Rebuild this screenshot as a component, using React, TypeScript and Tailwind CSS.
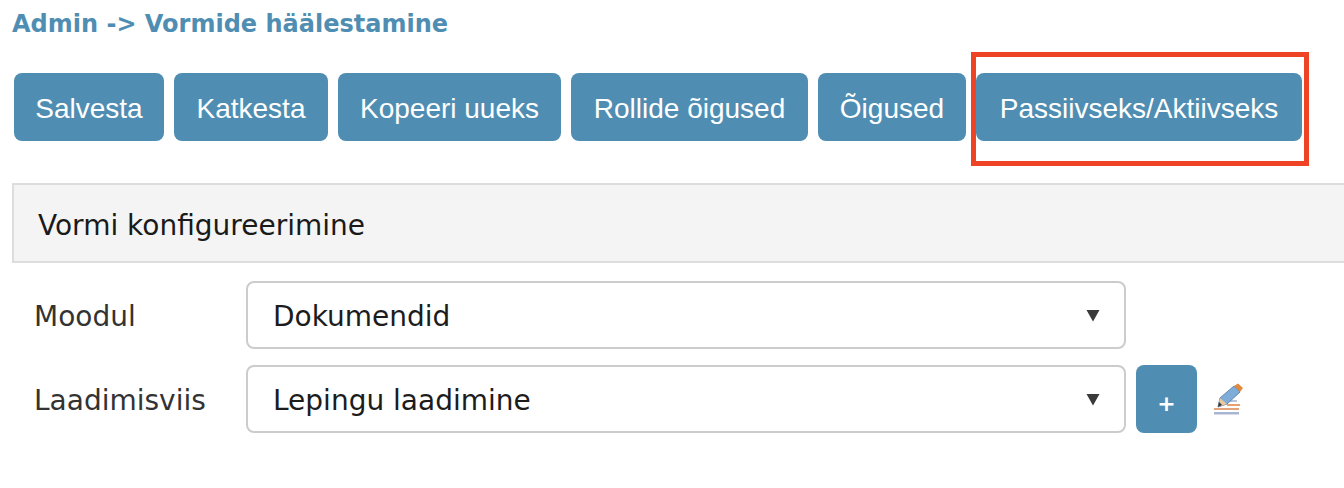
const buttons = [
  { label: 'Salvesta', width: 'w-[150px]' },
  { label: 'Katkesta', width: 'w-[154px]' },
  { label: 'Kopeeri uueks', width: 'w-[223px]' },
  { label: 'Rollide õigused', width: 'w-[237px]' },
  { label: 'Õigused', width: 'w-[148px]' },
];

function ActionButton({ label, width }: { label: string; width: string }) {
  return (
    <button className={`h-[68px] ${width} rounded-[8px] bg-[#4f8eb2] pt-[3px] font-['Liberation_Sans',sans-serif] text-[28px] text-white`}>
      {label}
    </button>
  );
}

function Caret() {
  return (
    <svg className="w-[14px] h-[13px]" viewBox="0 0 14 13">
      <path d="M0.5 1h13L7 12.5z" fill="#3a3a3a" />
    </svg>
  );
}

function FakeSelect({ value }: { value: string }) {
  return (
    <div className="flex h-[68px] w-[880px] items-center justify-between rounded-[8px] border-2 border-[#cccccc] bg-white pl-[25px] pr-[24px] text-[#1c1c1c]">
      <span className="pt-[3px]">{value}</span>
      <Caret />
    </div>
  );
}

function EditIcon() {
  return (
    <svg className="w-[30px] h-[32px]" viewBox="0 0 30 32">
      <rect x="7" y="17" width="17" height="2" fill="#b7c4dc" />
      <rect x="14" y="21" width="13" height="2" fill="#e8a070" />
      <rect x="1" y="25" width="25" height="2" fill="#e3a27a" />
      <rect x="1" y="29" width="25" height="2.5" fill="#a9b6d2" />
      <path d="M5 24 L7 15 L21 3 L27 9 L14 21 Z" fill="#7fadd9" stroke="#5d86b4" strokeWidth="1" />
      <path d="M5 24 L7 15 L14 21 Z" fill="#e8c79a" />
      <path d="M5 24 L6 19 L9 22 Z" fill="#333333" />
      <path d="M21 3 L25 0.5 L30 5 L27 9 Z" fill="#e08a3c" />
    </svg>
  );
}

export default function App() {
  return (
    <div className="h-[488px] w-[1344px] overflow-hidden bg-white font-['DejaVu_Sans',sans-serif] text-[28px]">
      <h1 className="pl-[12px] pt-[10px] text-[24px] leading-[28px] font-bold text-[#4f8eb2]">
        Admin -&gt; Vormide häälestamine
      </h1>

      <div className="mt-[35px] flex gap-[10px] pl-[14px]">
        {buttons.map(b => (
          <ActionButton key={b.label} label={b.label} width={b.width} />
        ))}
        <div className="relative">
          <ActionButton label="Passiivseks/Aktiivseks" width="w-[326px]" />
          <div className="absolute -left-[5px] -right-[7px] -top-[21px] -bottom-[25px] border-[5px] border-[#ee4325]"></div>
        </div>
      </div>

      <div className="mt-[42px] ml-[12px] flex h-[80px] items-center border-y-2 border-l-2 border-[#dddddd] bg-[#f4f4f4] pl-[24px] pt-[5px] text-[#1a1a1a]">
        Vormi konfigureerimine
      </div>

      <div className="mt-[18px] flex items-center pl-[34px]">
        <label className="w-[212px] pt-[4px] text-[#333333]">Moodul</label>
        <FakeSelect value="Dokumendid" />
      </div>

      <div className="mt-[16px] flex items-center pl-[34px]">
        <label className="w-[212px] pt-[4px] text-[#333333]">Laadimisviis</label>
        <FakeSelect value="Lepingu laadimine" />
        <button className="ml-[10px] h-[68px] w-[61px] rounded-[8px] bg-[#4f8eb2] pt-[8px] text-[22px] font-bold text-white">+</button>
        <span className="ml-[16px] flex">
          <EditIcon />
        </span>
      </div>
    </div>
  );
}
